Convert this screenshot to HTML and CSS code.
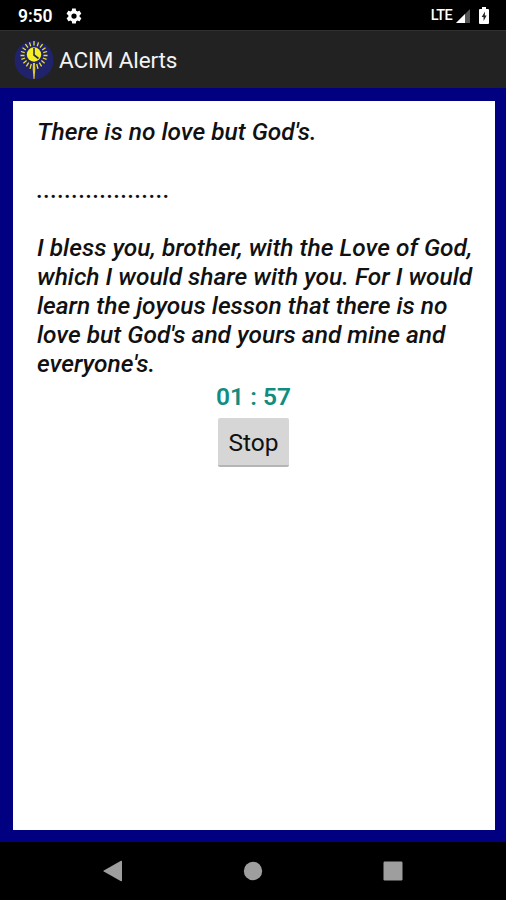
FILE: index.html
```html
<!DOCTYPE html>
<html lang="en">
<head>
    <meta charset="UTF-8">
    <meta name="viewport" content="width=device-width, initial-scale=1.0">
    <title>ACIM Alerts</title>
    <link rel="stylesheet" href="styles.css">
</head>
<body>

    <div class="status-bar">
        <span class="clock">9:50</span>
        <svg class="gear" width="18" height="18" viewBox="0 0 24 24">
            <path fill="#fff" fill-rule="evenodd" d="M19.4 13c0-.3.1-.6.1-1s0-.7-.1-1l2.1-1.600c.2-.2.3-.4.1-.7l-2-3.400c-.1-.2-.4-.3-.6-.2l-2.500 1c-.5-.4-1.100-.7-1.700-1l-.4-2.600c0-.3-.2-.5-.5-.5h-4c-.3 0-.5.2-.5.4l-.4 2.700c-.6.2-1.100.6-1.700 1l-2.500-1c-.2-.1-.5 0-.6.2l-2 3.400c-.1.2-.1.500.1.7L4.500 11c0 .3-.1.600-.1 1s0 .7.1 1l-2.100 1.600c-.2.2-.3.400-.1.7l2 3.400c.1.2.4.3.6.2l2.500-1c.5.4 1.100.7 1.700 1l.4 2.600c0 .3.2.5.5.5h4c.3 0 .5-.2.5-.5l.4-2.600c.6-.3 1.200-.6 1.700-1l2.500 1c.2.1.5 0 .6-.2l2-3.400c.1-.3.100-.5-.1-.7zM12 15.500a3.500 3.500 0 1 1 0-7 3.500 3.500 0 0 1 0 7z"/>
        </svg>
        <span class="network">LTE</span>
        <svg class="signal" width="16" height="16" viewBox="0 0 16 16">
            <path fill="#555" d="M15 1v14H1z"/>
            <path fill="#fff" d="M10 6V15H1z"/>
        </svg>
        <svg class="battery" width="10" height="17" viewBox="0 0 10 17">
            <path fill="#fff" d="M3 0h4v2h2q1 0 1 1v13q0 1-1 1H1q-1 0-1-1V3q0-1 1-1h2z"/>
            <path fill="#222" d="M6 4.500L2.700 10h1.900v4l3-5.500H5.800z"/>
        </svg>
    </div>

    <div class="app-bar">
        <svg class="logo" width="40" height="40" viewBox="0 0 40 40">
            <circle cx="20" cy="20" r="19.500" fill="#20236a"/>
            <g stroke="#eee12c" stroke-width="1.300">
                <path d="M20 5.500V1M23.300 6.200l1.200-3.800M26 7.700l2.600-3.500M28.200 10l3.300-2.200M29.300 12.700l3.800-1.200M29.500 15.500h4M28.900 18l3.700 1.300M27.400 20.600l3.200 2.700M25.300 22.600l2.300 3.800M22.700 24l1.300 4.800M16.700 6.200l-1.200-3.800M14 7.700l-2.600-3.500M11.800 10L8.500 7.800M10.700 12.700l-3.800-1.200M10.500 15.500h-4M11.100 18l-3.700 1.300M12.600 20.600l-3.200 2.700M14.700 22.600l-2.300 3.800M17.300 24L16 28.800"/>
            </g>
            <path fill="#ddc92c" d="M19 23h2l.3 6-.8 10h-1l-.8-10z"/>
            <circle cx="20" cy="14.500" r="7.200" fill="#f5ee24"/>
            <path fill="none" stroke="#272955" stroke-width="1.600" d="M20 8v7l4.500 3.500"/>
        </svg>
        <span class="app-title">ACIM Alerts</span>
    </div>

    <div class="frame">
        <div class="page">
            <div class="lesson">
                There is no love but God's.<br>
                <br>
                <span class="dots">...................</span><br>
                <br>
                I bless you, brother, with the Love of God,<br>
                which I would share with you. For I would<br>
                learn the joyous lesson that there is no<br>
                love but God's and yours and mine and<br>
                everyone's.
            </div>
            <div class="timer">01 : 57</div>
            <button class="stop-btn">Stop</button>
        </div>
    </div>

    <div class="nav-bar">
        <svg width="20" height="22" viewBox="0 0 20 22">
            <path fill="#9e9e9e" d="M18 .8q1-.5 1 .6v19.200q0 1.100-1 .6L.8 11.600q-.9-.6 0-1.200z"/>
        </svg>
        <svg width="20" height="22" viewBox="0 0 20 22">
            <circle cx="10" cy="11" r="9.200" fill="#9e9e9e"/>
        </svg>
        <svg width="20" height="22" viewBox="0 0 20 22">
            <rect x=".5" y="1.500" width="19" height="19" rx="1.200" fill="#9e9e9e"/>
        </svg>
    </div>

</body>
</html>
```

FILE: styles.css
```css
body {
    display: flex;
    flex-direction: column;
    height: 900px;
    margin: 0;
    background-color: #000;
    color: #fff;
    font-family: Roboto, sans-serif;
}
.status-bar {
    display: flex;
    align-items: center;
    box-sizing: border-box;
    height: 30px;
    padding: 1px 17px 0 18px;
}
.clock {
    font-size: 17.5px;
    font-weight: 600;
    letter-spacing: -0.1px;
}
.gear {
    margin-left: 13px;
}
.network {
    margin-left: auto;
    font-size: 14.5px;
    font-weight: 500;
    letter-spacing: -0.6px;
}
.signal {
    margin-left: 3px;
}
.battery {
    margin-left: 8px;
}
.app-bar {
    display: flex;
    align-items: center;
    box-sizing: border-box;
    height: 58px;
    padding: 1px 14px 0;
    border-top: 1px solid #303030;
    background-color: #222;
}
.app-title {
    margin-left: 5px;
    font-size: 22.5px;
    letter-spacing: -0.15px;
    color: #f3f3f3;
}
.frame {
    flex: 1;
    display: flex;
    padding: 12.5px 11.5px 12.5px 12.5px;
    background-color: #000080;
}
.page {
    flex: 1;
    display: flex;
    flex-direction: column;
    align-items: center;
    padding-top: 16px;
    background-color: #fff;
}
.lesson {
    align-self: flex-start;
    margin-left: 24.5px;
    font-size: 24.5px;
    font-weight: 500;
    font-style: italic;
    line-height: 29px;
    white-space: nowrap;
    color: #111;
}
.dots {
    letter-spacing: 0.42px;
}
.timer {
    margin-top: 4px;
    font-size: 24.5px;
    font-weight: 600;
    line-height: 29px;
    color: #118c80;
}
.stop-btn {
    width: 71px;
    height: 49px;
    margin-top: 7px;
    padding: 2px 0 0;
    border: none;
    border-bottom: 2px solid #b5b5b5;
    border-radius: 2px;
    background-color: #d6d6d6;
    font-family: Roboto, sans-serif;
    font-size: 24.5px;
    color: #111;
}
.nav-bar {
    display: flex;
    align-items: center;
    justify-content: center;
    gap: 120px;
    height: 58px;
}
```
